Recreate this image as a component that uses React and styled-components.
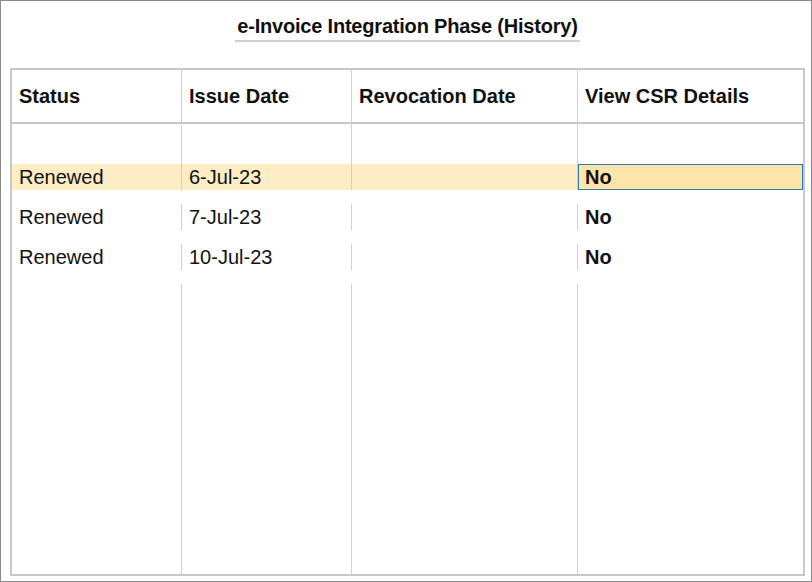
import React from "react";
import styled, { createGlobalStyle } from "styled-components";

const G = createGlobalStyle`
  html,body{margin:0;padding:0;background:#fff;}
  body{font-family:"Liberation Sans",Arial,sans-serif;}
`;

const Frame = styled.div`
  width:812px;height:582px;box-sizing:border-box;border:1px solid #8a8a8a;
  display:flex;flex-direction:column;align-items:center;padding:13px 6px 5px 9px;
`;
const Title = styled.div`
  font-size:20px;font-weight:bold;color:#111;padding:0 2px 2px;
  border-bottom:2px solid #d0d0d0;line-height:24px;letter-spacing:-0.2px;
`;
const Table = styled.div`
  margin-top:26px;align-self:stretch;flex:1;box-sizing:border-box;
  border:2px solid #c8c8c8;display:grid;
  grid-template-columns:170px 170px 226px 1fr;
  grid-template-rows:54px 40px repeat(3,40px) 1fr;
`;
const Head = styled.div`
  font-size:20px;font-weight:bold;color:#111;display:flex;align-items:center;
  padding-left:7px;border-bottom:2px solid #c8c8c8;
  border-right:${p=>p.$last?"none":"1px solid #d0d0d0"};
`;
const Cell = styled.div`
  font-size:20px;color:#111;display:flex;align-items:center;padding-left:7px;
  font-weight:${p=>p.$bold?"bold":"normal"};
  border-right:${p=>p.$last?"none":"1px solid #d0d0d0"};
  position:relative;
  background:${p=>p.$sel?"#fdedc4":"transparent"};
  height:26px;align-self:start;margin-top:${p=>p.$first?"0":"0"};
  ${p=>p.$focus?"background:#fde4a9;box-shadow:inset 0 0 0 1px #2a7ab0;":""}
`;
const Filler = styled.div`
  border-right:${p=>p.$last?"none":"1px solid #d0d0d0"};
`;

const rows=[["Renewed","6-Jul-23"],["Renewed","7-Jul-23"],["Renewed","10-Jul-23"]];

export default function App(){
  return (<>
    <G/>
    <Frame>
      <Title>e-Invoice Integration Phase (History)</Title>
      <Table>
        <Head>Status</Head><Head>Issue Date</Head><Head>Revocation Date</Head><Head $last>View CSR Details</Head>
        <Filler/><Filler/><Filler/><Filler $last/>
        {rows.map((r,i)=>(
          <React.Fragment key={i}>
            <Cell $sel={i===0}>{r[0]}</Cell>
            <Cell $sel={i===0}>{r[1]}</Cell>
            <Cell $sel={i===0}></Cell>
            <Cell $last $bold $focus={i===0}>No</Cell>
          </React.Fragment>
        ))}
        <Filler/><Filler/><Filler/><Filler $last/>
      </Table>
    </Frame>
  </>);
}
